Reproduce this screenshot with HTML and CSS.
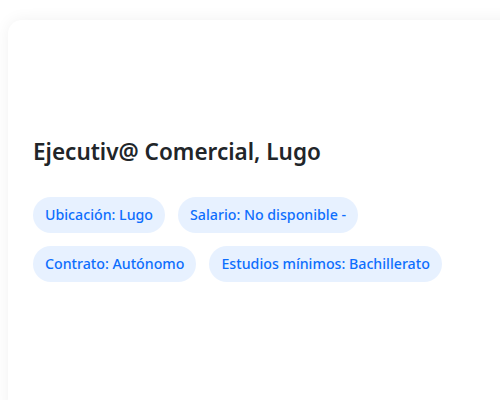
FILE: index.html
```html
<!DOCTYPE html>
<html lang="es">
<head>
<meta charset="utf-8">
<link rel="stylesheet" href="styles.css">
</head>
<body>
<div class="card">
  <h2 class="title">Ejecutiv@ Comercial, Lugo</h2>
  <div class="tags">
    <span class="tag">Ubicación: Lugo</span>
    <span class="tag">Salario: No disponible -</span>
    <span class="tag">Contrato: Autónomo</span>
    <span class="tag">Estudios mínimos: Bachillerato</span>
  </div>
</div>
</body>
</html>
```
FILE: styles.css
```css
html, body {
  margin: 0;
  padding: 0;
  background: #ffffff;
  font-family: "Noto Sans", "Open Sans", sans-serif;
}
html {
  height: 400px;
  overflow: hidden;
}
body {
  height: 400px;
  padding: 20px 0 0 8px;
  box-sizing: border-box;
  overflow: hidden;
}
.card {
  width: 520px;
  height: 400px;
  background: #ffffff;
  border-radius: 14px;
  box-shadow: 0 0 16px rgba(0, 0, 0, 0.06);
  padding: 118px 25px 25px 25px;
  box-sizing: border-box;
}
.title {
  margin: 0 0 32px 0;
  font-size: 22.5px;
  line-height: 27px;
  font-weight: 600;
  color: #212529;
}
.tags {
  display: flex;
  flex-wrap: wrap;
  gap: 13px;
  width: 420px;
}
.tag {
  display: inline-block;
  padding: 8px 12px;
  font-size: 14.2px;
  line-height: 20px;
  font-weight: 500;
  color: #0d6efd;
  background: #e7f1ff;
  border-radius: 18px;
  white-space: nowrap;
}
```
